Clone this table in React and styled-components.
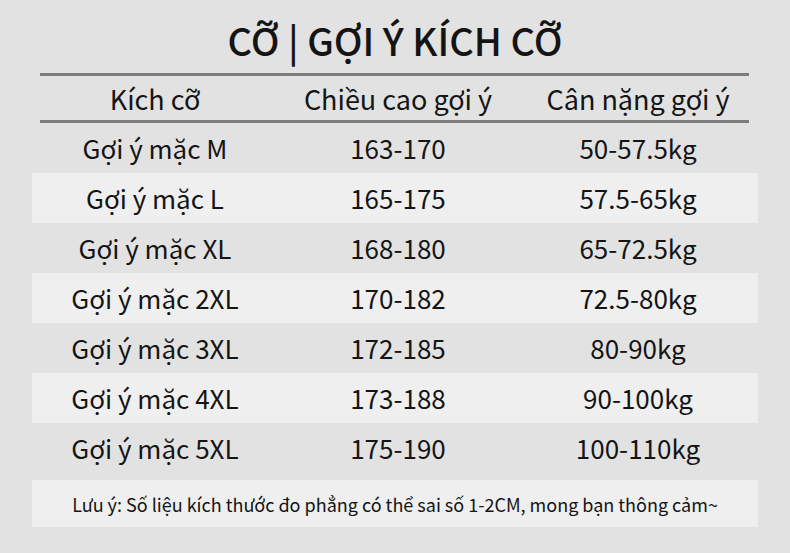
import React from "react";
import styled, { createGlobalStyle } from "styled-components";

const GlobalStyle = createGlobalStyle`
  html, body {
    margin: 0;
    padding: 0;
    background: #e2e2e2;
  }
  body {
    font-family: "Noto Sans CJK SC", "Noto Sans", sans-serif;
    color: #141414;
  }
`;

const rows = [
  ["Gợi ý mặc M", "163-170", "50-57.5kg"],
  ["Gợi ý mặc L", "165-175", "57.5-65kg"],
  ["Gợi ý mặc XL", "168-180", "65-72.5kg"],
  ["Gợi ý mặc 2XL", "170-182", "72.5-80kg"],
  ["Gợi ý mặc 3XL", "172-185", "80-90kg"],
  ["Gợi ý mặc 4XL", "173-188", "90-100kg"],
  ["Gợi ý mặc 5XL", "175-190", "100-110kg"],
];

export default function App() {
  return (
    <Page>
      <GlobalStyle />
      <Title>CỠ | GỢI Ý KÍCH CỠ</Title>
      <Table>
        <Rule />
        <HeadRow>
          <Cell>Kích cỡ</Cell>
          <Cell>Chiều cao gợi ý</Cell>
          <Cell>Cân nặng gợi ý</Cell>
        </HeadRow>
        <Rule />
        {rows.map((r, i) => (
          <Row key={r[0]} $striped={i % 2 === 1}>
            <Cell>{r[0]}</Cell>
            <Cell>{r[1]}</Cell>
            <Cell>{r[2]}</Cell>
          </Row>
        ))}
        <Note>
          Lưu ý: Số liệu kích thước đo phẳng có thể sai số 1-2CM, mong bạn thông cảm~
        </Note>
      </Table>
    </Page>
  );
}

const Page = styled.div`
  width: 790px;
  height: 553px;
  overflow: hidden;
  background: #e2e2e2;
`;

const Title = styled.h1`
  margin: 0;
  height: 73px;
  display: flex;
  align-items: center;
  justify-content: center;
  font-size: 38px;
  font-weight: 500;
  padding-top: 6px;
  box-sizing: border-box;
`;

const Table = styled.div`
  padding: 0 32px;
  display: flex;
  flex-direction: column;
`;

const Rule = styled.div`
  height: 3px;
  margin: 0 9px 0 8px;
  background: #7d7d7d;
`;

const Grid = styled.div`
  display: grid;
  grid-template-columns: 246px 240px 240px;
  align-items: center;
`;

const HeadRow = styled(Grid)`
  height: 44px;
  font-size: 27px;
`;

const Row = styled(Grid)`
  height: 50px;
  font-size: 26px;
  background: ${(p) => (p.$striped ? "#efefef" : "transparent")};
  &:nth-of-type(3) {
    margin-top: 2px;
  }
`;

const Cell = styled.div`
  text-align: center;
  line-height: 1;
`;

const Note = styled.div`
  margin-top: 7px;
  height: 47px;
  background: #efefef;
  display: flex;
  align-items: center;
  justify-content: center;
  font-size: 18px;
`;
